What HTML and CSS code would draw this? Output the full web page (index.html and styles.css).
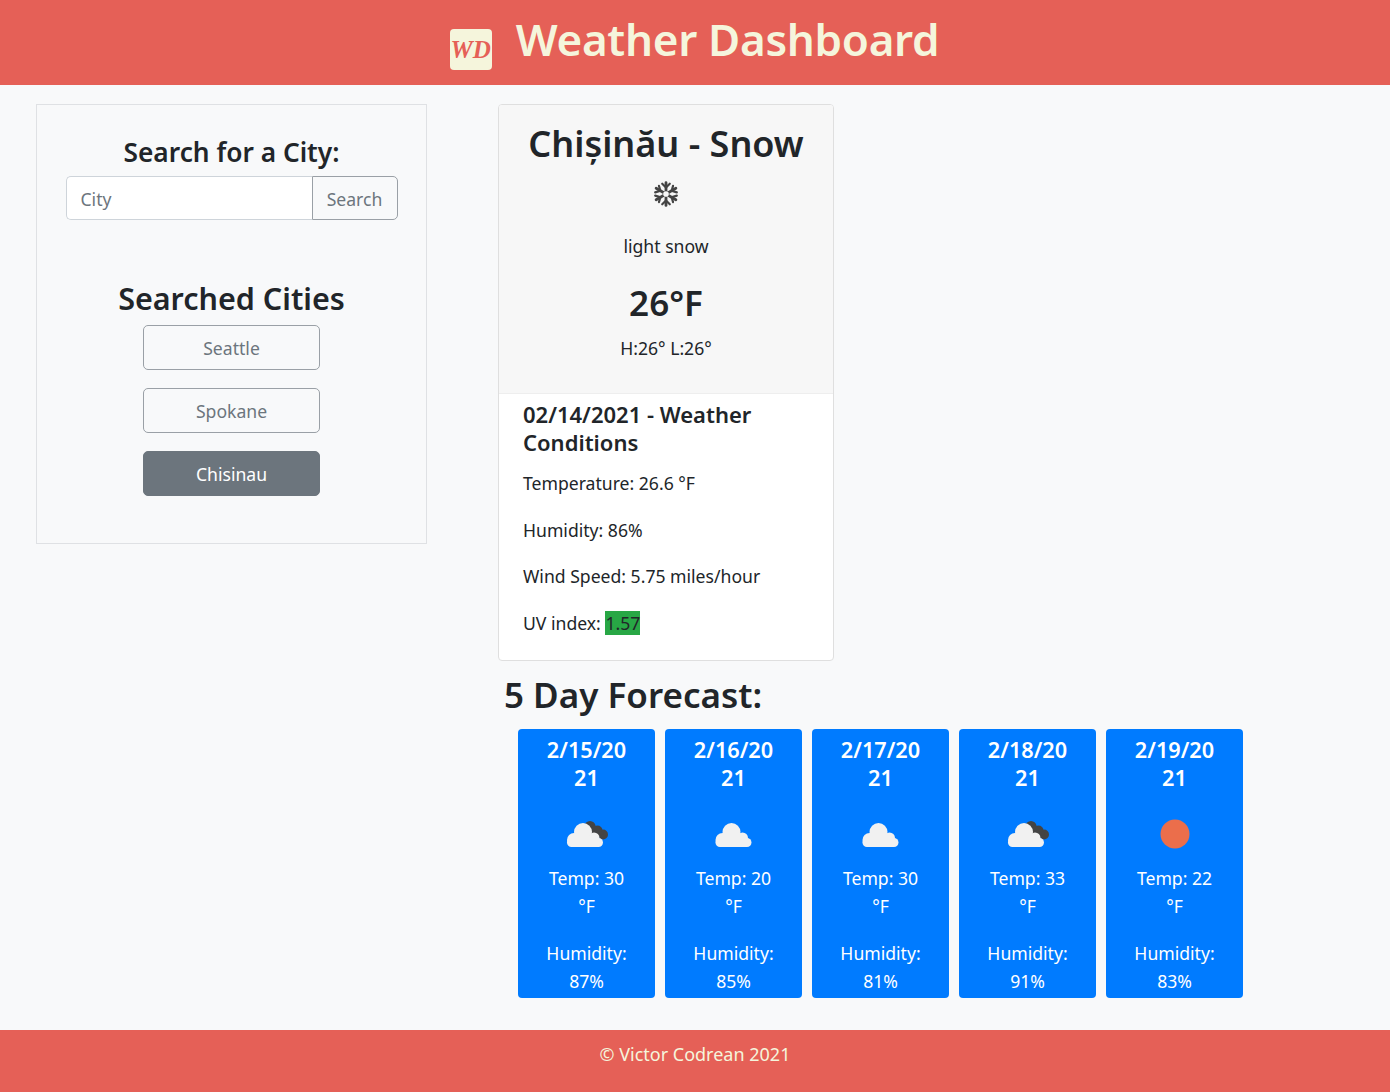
FILE: index.html
```html
<!DOCTYPE html>
<html lang="en">
<head>
    <meta charset="UTF-8">
    <meta name="viewport" content="width=device-width, initial-scale=1.0">
    <title>Weather Dashboard</title>
    <link rel="stylesheet" href="styles.css">
</head>
<body>
    <header class="site-header">
        <span class="logo">WD</span>
        <h1>Weather Dashboard</h1>
    </header>
    <main class="layout">
        <section class="search-panel">
            <h3>Search for a City:</h3>
            <form class="search-form">
                <input type="text" placeholder="City">
                <button type="button">Search</button>
            </form>
            <h2>Searched Cities</h2>
            <button type="button" class="city-btn">Seattle</button>
            <button type="button" class="city-btn">Spokane</button>
            <button type="button" class="city-btn active">Chisinau</button>
        </section>
        <section class="results">
            <div class="current-card">
                <div class="current-top">
                    <h2>Chișinău - Snow</h2>
                    <svg class="snow-icon" viewBox="0 0 24 24" fill="none" stroke="#444" stroke-linecap="round">
                        <g stroke-width="2.6">
                            <path d="M12 1.5v21M2.9 6.7l18.2 10.6M21.1 6.7L2.9 17.3"/>
                        </g>
                        <g stroke-width="2">
                            <path d="M8.5 2.5L12 6l3.5-3.500M8.500 21.500L12 18l3.500 3.500"/>
                            <path d="M2 10.500L6.800 9 5.500 4.500M22 10.500L17.200 9l1.300-4.500"/>
                            <path d="M2 13.500L6.800 15l-1.300 4.500M22 13.500L17.200 15l1.300 4.500"/>
                        </g>
                        <circle cx="12" cy="12" r="2.600" fill="#f7f7f7" stroke="none"/>
                    </svg>
                    <p class="desc">light snow</p>
                    <div class="temp">26°F</div>
                    <p class="high-low">H:26° L:26°</p>
                </div>
                <div class="current-body">
                    <h4>02/14/2021 - Weather Conditions</h4>
                    <p>Temperature: 26.6 °F</p>
                    <p>Humidity: 86%</p>
                    <p>Wind Speed: 5.75 miles/hour</p>
                    <p>UV index: <span class="uv">1.57</span></p>
                </div>
            </div>
            <h2 class="forecast-title">5 Day Forecast:</h2>
            <div class="forecast">
                <div class="day">
                    <h4>2/15/2021</h4>
                    <svg class="day-icon" viewBox="0 0 44 30"><use href="#dark-cloud"/><use href="#white-cloud"/></svg>
                    <p>Temp: 30 °F</p>
                    <p>Humidity: 87%</p>
                </div>
                <div class="day">
                    <h4>2/16/2021</h4>
                    <svg class="day-icon" viewBox="0 0 44 30"><use href="#white-cloud" x="1.500"/></svg>
                    <p>Temp: 20 °F</p>
                    <p>Humidity: 85%</p>
                </div>
                <div class="day">
                    <h4>2/17/2021</h4>
                    <svg class="day-icon" viewBox="0 0 44 30"><use href="#white-cloud" x="1.500"/></svg>
                    <p>Temp: 30 °F</p>
                    <p>Humidity: 81%</p>
                </div>
                <div class="day">
                    <h4>2/18/2021</h4>
                    <svg class="day-icon" viewBox="0 0 44 30"><use href="#dark-cloud"/><use href="#white-cloud"/></svg>
                    <p>Temp: 33 °F</p>
                    <p>Humidity: 91%</p>
                </div>
                <div class="day">
                    <h4>2/19/2021</h4>
                    <svg class="day-icon" viewBox="0 0 44 30"><circle cx="22" cy="15" r="14.500" fill="#eb6e4b"/></svg>
                    <p>Temp: 22 °F</p>
                    <p>Humidity: 83%</p>
                </div>
            </div>
        </section>
    </main>
    <footer class="site-footer">© Victor Codrean 2021</footer>
    <svg class="defs" width="0" height="0">
        <defs>
            <g id="dark-cloud" fill="#444">
                <circle cx="25" cy="7.500" r="5.500"/>
                <circle cx="32.500" cy="11.500" r="5"/>
                <circle cx="38" cy="15.500" r="5"/>
                <path d="M22 4l12 4 5 7-8 5-9-6z"/>
            </g>
            <g id="white-cloud" fill="#f1f1f1">
                <circle cx="18" cy="13" r="9"/>
                <circle cx="29" cy="19" r="5.500"/>
                <circle cx="9" cy="21" r="7"/>
                <rect x="2" y="19" width="36" height="9" rx="4.500"/>
            </g>
        </defs>
    </svg>
</body>
</html>
```

FILE: styles.css
```css
* { box-sizing: border-box; }
body { margin: 0; background: #f8f9fa; color: #212529; font-family: "Noto Sans", Arial, sans-serif; font-size: 17.6px; }
h1, h2, h3, h4, p { margin: 0; }
.defs { position: absolute; }

.site-header { height: 85px; background: #e56057; color: #f5f5dc; display: flex; justify-content: center; padding-right: 1px; }
.site-header h1 { font-size: 44px; font-weight: 600; line-height: 79px; letter-spacing: -0.3px; }
.logo { width: 42px; height: 41px; margin: 29px 24px 0 0; background: #f5f5dc; border-radius: 4px; color: #e56057; font-family: "Liberation Serif", serif; font-style: italic; font-weight: 700; font-size: 25px; line-height: 41px; text-align: center; }

.layout { display: flex; align-items: flex-start; padding: 19px 0 0 36px; gap: 71px; }

.search-panel { width: 391px; height: 440px; flex: none; border: 1px solid #dfe1e4; display: flex; flex-direction: column; align-items: center; padding-top: 31px; }
.search-panel h3 { font-size: 26.3px; font-weight: 600; line-height: 33px; margin-bottom: 7px; }
.search-panel h2 { font-size: 30.5px; font-weight: 600; line-height: 38px; margin-top: 59px; margin-bottom: 8px; }
.search-form { display: flex; width: 332px; height: 44px; }
.search-form input { flex: 1; min-width: 0; font: inherit; color: #495057; padding: 1px 14px 0; border: 1px solid #ced4da; border-right: 0; border-radius: 5px 0 0 5px; background: #fff; }
.search-form input::placeholder { color: #6c757d; }
.search-form button { width: 86px; font: inherit; color: #6c757d; background: transparent; border: 1px solid #9aa0a6; border-radius: 0 5px 5px 0; padding: 1px 0 0; }
.city-btn { width: 177px; height: 45px; margin-bottom: 18px; font: inherit; color: #6c757d; background: transparent; border: 1px solid #9aa0a6; border-radius: 5px; padding: 0; }
.city-btn.active { background: #6c757d; color: #fff; border-color: #6c757d; }

.results { flex: none; width: 760px; }
.current-card { width: 336px; height: 557px; background: #fff; border: 1px solid #dfdfdf; border-radius: 4px; overflow: hidden; }
.current-top { height: 289px; background: #f7f7f7; border-bottom: 1px solid #eeeeee; text-align: center; padding-top: 16px; }
.current-top h2 { font-size: 36px; font-weight: 600; line-height: 46px; }
.snow-icon { display: block; width: 26px; height: 26px; margin: 14px auto 0; }
.desc { line-height: 28px; margin-top: 25px; }
.temp { font-size: 35px; font-weight: 600; line-height: 46px; margin-top: 20px; }
.high-low { line-height: 28px; margin-top: 8px; }
.current-body { padding: 6px 24px; }
.current-body h4 { font-size: 22px; font-weight: 600; line-height: 28px; margin-bottom: 13px; }
.current-body p { line-height: 28px; margin-bottom: 18.500px; }
.uv { background: #28a745; }

.forecast-title { font-size: 35px; font-weight: 600; line-height: 42px; margin: 13px 0 13px 6px; }
.forecast { display: flex; gap: 10px; padding-left: 20px; }
.day { width: 137px; height: 269px; flex: none; background: #007bff; color: #fff; border-radius: 4px; text-align: center; padding: 7px 24px 0; }
.day h4 { font-size: 21.7px; font-weight: 600; line-height: 28px; overflow-wrap: anywhere; }
.day-icon { display: block; width: 44px; height: 30px; margin: 27px auto 15px; }
.day p { line-height: 28px; margin-bottom: 19px; }

.site-footer { margin-top: 32px; height: 62px; background: #e56057; color: #f5f5dc; font-size: 18px; text-align: center; line-height: 49px; }
```
